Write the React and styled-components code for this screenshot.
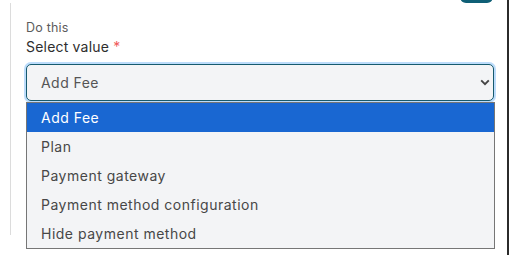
import React, { useState } from "react";
import styled, { createGlobalStyle } from "styled-components";

const GlobalStyle = createGlobalStyle`
  html, body {
    margin: 0;
    padding: 0;
    background: #ffffff;
    font-family: Inter, "Noto Sans", sans-serif;
  }
`;

const options = [
  "Add Fee",
  "Plan",
  "Payment gateway",
  "Payment method configuration",
  "Hide payment method",
];

const Page = () => {
  const [selected] = useState(0);
  return (
    <>
      <GlobalStyle />
      <Frame>
        <Toolbar>
          <TopButton aria-label="save" />
        </Toolbar>
        <Panel>
          <Hint>Do this</Hint>
          <Label>
            Select value <Required>*</Required>
          </Label>
          <SelectWrap>
            <SelectBox>
              <span>{options[selected]}</span>
              <svg width="10" height="7" viewBox="0 0 10 7">
                <path
                  d="M1.2 1.4 L5 5.2 L8.8 1.4"
                  fill="none"
                  stroke="#444"
                  strokeWidth="1.9"
                />
              </svg>
            </SelectBox>
            <ListBox>
              {options.map((o, i) => (
                <Option key={o} active={i === selected}>
                  {o}
                </Option>
              ))}
            </ListBox>
          </SelectWrap>
        </Panel>
      </Frame>
    </>
  );
};

//styled components
const Frame = styled.div`
  width: 507px;
  height: 255px;
  border-right: 2px solid #2b2b2b;
  box-sizing: content-box;
  overflow: hidden;
`;
const Toolbar = styled.div`
  height: 3px;
  display: flex;
  justify-content: flex-end;
  align-items: flex-end;
  padding-right: 14px;
  overflow: hidden;
`;
const TopButton = styled.div`
  width: 33px;
  height: 30px;
  flex: none;
  border-radius: 6px;
  background: #0f5f76;
`;
const Panel = styled.div`
  margin-left: 10px;
  margin-right: 13px;
  height: 232px;
  border-left: 1px solid #dcdcdc;
  padding: 16px 0 0 15px;
  box-sizing: border-box;
`;
const Hint = styled.div`
  font-size: 12.5px;
  line-height: 18px;
  letter-spacing: 0.2px;
  color: #5c5c5c;
`;
const Label = styled.div`
  font-size: 14px;
  line-height: 20px;
  letter-spacing: 0.2px;
  color: #2e2e2e;
  margin-bottom: 7px;
`;
const Required = styled.span`
  color: #f05a5a;
`;
const SelectWrap = styled.div`
  position: relative;
  width: 468px;
`;
const SelectBox = styled.div`
  height: 37px;
  box-sizing: border-box;
  display: flex;
  align-items: center;
  justify-content: space-between;
  padding: 0 3px 0 14px;
  border: 1px solid #165a6e;
  border-radius: 5px;
  background: #f3f4f6;
  box-shadow: 0 0 0 2px #bcdcfb;
  font-size: 14px;
  letter-spacing: 0.45px;
  color: #555;
`;
const ListBox = styled.div`
  position: absolute;
  top: 38px;
  left: 0;
  width: 469px;
  box-sizing: border-box;
  border: 1px solid #767676;
  background: #f3f4f6;
`;
const Option = styled.div`
  height: 29px;
  display: flex;
  align-items: center;
  padding-left: 14px;
  font-size: 14px;
  letter-spacing: 0.5px;
  color: ${(p) => (p.active ? "#ffffff" : "#474747")};
  background: ${(p) => (p.active ? "#1967d2" : "transparent")};
`;

export default Page;
